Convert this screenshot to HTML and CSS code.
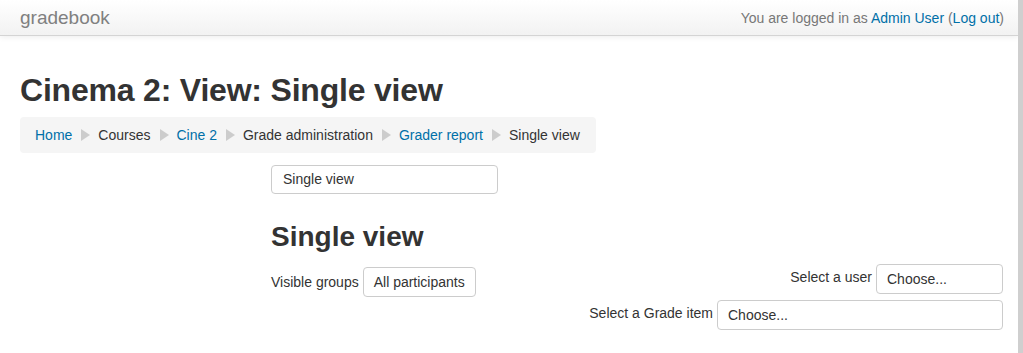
FILE: index.html
```html
<!DOCTYPE html>
<html>
<head>
<meta charset="utf-8">
<title>Cinema 2: View: Single view</title>
<link rel="stylesheet" href="styles.css">
</head>
<body>
<div class="page">
  <header class="navbar">
    <span class="brand">gradebook</span>
    <span class="login">You are logged in as <a href="#">Admin User</a> (<a href="#">Log out</a>)</span>
  </header>
  <div class="content">
    <h1 class="page-title">Cinema 2: View: Single view</h1>
    <nav class="breadcrumb">
      <a href="#">Home</a><span class="sep"></span>
      <span>Courses</span><span class="sep"></span>
      <a href="#">Cine 2</a><span class="sep"></span>
      <span>Grade administration</span><span class="sep"></span>
      <a href="#">Grader report</a><span class="sep"></span>
      <span>Single view</span>
    </nav>
    <div class="layout">
      <aside class="side"></aside>
      <main class="main">
        <div class="jump">Single view</div>
        <h2 class="main-title">Single view</h2>
        <div class="controls">
          <div class="groups">
            <span class="label">Visible groups</span>
            <span class="btn">All participants</span>
          </div>
          <div class="selectors">
            <div class="sel-row">
              <span class="label">Select a user</span>
              <span class="select user">Choose...</span>
            </div>
            <div class="sel-row">
              <span class="label">Select a Grade item</span>
              <span class="select item">Choose...</span>
            </div>
          </div>
        </div>
      </main>
    </div>
  </div>
</div>
<div class="edge"></div>
</body>
</html>
```

FILE: styles.css
```css
html, body {
  margin: 0;
  padding: 0;
  height: 100%;
}
body {
  display: flex;
  font-family: "Liberation Sans", Arial, sans-serif;
  font-size: 14px;
  color: #333;
  background: #fff;
  overflow: hidden;
}
a { color: #0070a8; text-decoration: none; }
.page {
  flex: 1;
  min-width: 0;
}
.edge {
  width: 5px;
  background: #cfcfcf;
}
.navbar {
  height: 36px;
  box-sizing: border-box;
  display: flex;
  align-items: center;
  justify-content: space-between;
  padding: 0 14px 0 20px;
  background: linear-gradient(#ffffff, #f2f2f2);
  border-bottom: 1px solid #d4d4d4;
  box-shadow: 0 1px 6px rgba(0,0,0,0.08);
}
.brand {
  font-size: 19px;
  color: #808080;
  margin-top: 1px;
}
.login {
  font-size: 14px;
  color: #777;
  margin-top: 1px;
}
.content {
  padding: 0 15px 0 20px;
}
.page-title {
  font-size: 32px;
  font-weight: bold;
  margin: 34px 0 0;
  line-height: 40px;
  letter-spacing: -0.2px;
}
.breadcrumb {
  display: inline-flex;
  align-items: center;
  margin-top: 7px;
  height: 36px;
  box-sizing: border-box;
  padding: 0 16px 0 15px;
  background: #f5f5f5;
  border-radius: 4px;
}
.sep {
  width: 0;
  height: 0;
  border-top: 6px solid transparent;
  border-bottom: 6px solid transparent;
  border-left: 9px solid #ccc;
  margin: 0 8px 0 9px;
}
.layout {
  display: grid;
  grid-template-columns: 231px 1fr;
  column-gap: 20px;
  margin-top: 12px;
}
.jump {
  width: 227px;
  height: 29px;
  box-sizing: border-box;
  border: 1px solid #ccc;
  border-radius: 4px;
  padding: 0 11px;
  line-height: 27px;
}
.main-title {
  font-size: 28px;
  font-weight: bold;
  margin: 25px 0 0;
  line-height: 36px;
}
.controls {
  display: flex;
  justify-content: space-between;
  align-items: flex-start;
  margin-top: 9px;
}
.groups {
  display: flex;
  align-items: center;
  gap: 4px;
  margin-top: 3px;
}
.btn {
  display: inline-block;
  height: 30px;
  box-sizing: border-box;
  border: 1px solid #ccc;
  border-radius: 4px;
  padding: 0 10px;
  line-height: 28px;
}
.selectors {
  display: flex;
  flex-direction: column;
  align-items: flex-end;
  gap: 6px;
}
.sel-row {
  display: flex;
  align-items: center;
  gap: 4px;
}
.sel-row .label { margin-top: -4px; }
.select {
  display: inline-block;
  height: 30px;
  box-sizing: border-box;
  border: 1px solid #ccc;
  border-radius: 4px;
  padding: 0 10px;
  line-height: 28px;
}
.select.user { width: 127px; }
.select.item { width: 286px; }
```
